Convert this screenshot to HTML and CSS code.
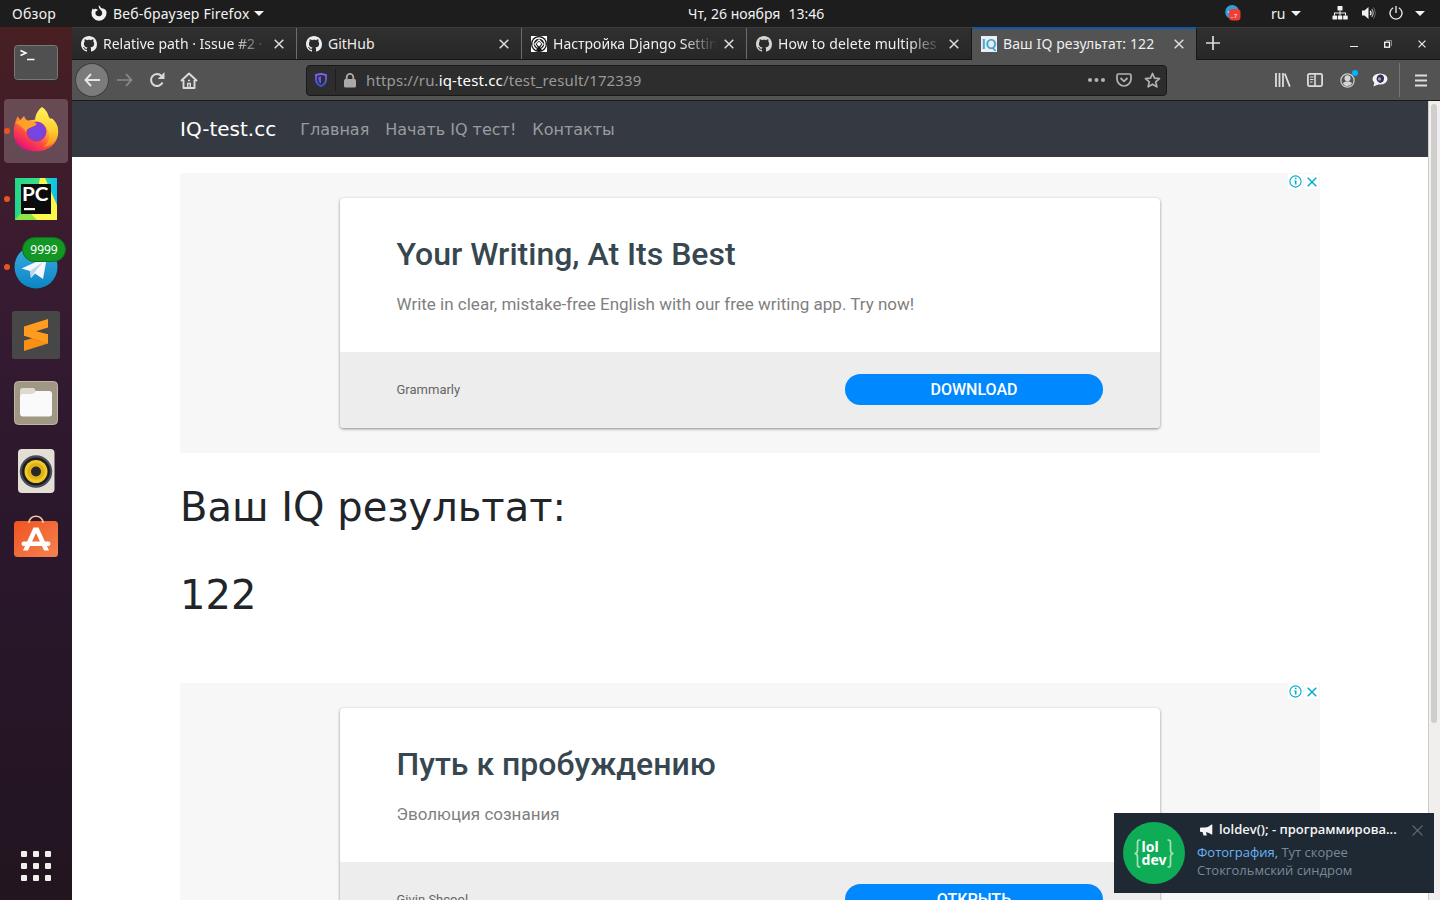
FILE: index.html
```
<!DOCTYPE html>
<html lang="ru">
<head>
<meta charset="utf-8">
<title>Ваш IQ результат: 122</title>
<link rel="stylesheet" href="styles.css">
</head>
<body>
<svg class="defs" width="0" height="0">
  <defs>
    <symbol id="github" viewBox="0 0 16 16"><path fill="currentColor" d="M8 0C3.58 0 0 3.58 0 8c0 3.54 2.29 6.53 5.47 7.59.4.07.55-.17.55-.38 0-.19-.01-.82-.01-1.49-2.01.37-2.53-.49-2.69-.94-.09-.23-.48-.94-.82-1.13-.28-.15-.68-.52-.01-.53.63-.01 1.08.58 1.23.82.72 1.21 1.87.87 2.33.66.07-.52.28-.87.51-1.07-1.78-.2-3.64-.89-3.64-3.95 0-.87.31-1.59.82-2.15-.08-.2-.36-1.02.08-2.12 0 0 .67-.21 2.2.82.64-.18 1.32-.27 2-.27s1.36.09 2 .27c1.53-1.04 2.2-.82 2.2-.82.44 1.1.16 1.92.08 2.12.51.56.82 1.27.82 2.15 0 3.07-1.87 3.75-3.65 3.95.29.25.54.73.54 1.48 0 1.07-.01 1.93-.01 2.2 0 .21.15.46.55.38A8.01 8.01 0 0 0 16 8c0-4.42-3.58-8-8-8z"/></symbol>
    <symbol id="cross" viewBox="0 0 10 10"><path d="M.7.7l8.6 8.6M9.3.7L.7 9.3" stroke="currentColor" stroke-width="1.5" fill="none"/></symbol>
    <symbol id="caret" viewBox="0 0 10 5"><path d="M0 0h10L5 5z" fill="currentColor"/></symbol>
    <symbol id="adinfo" viewBox="0 0 15 15"><circle cx="7.5" cy="7.5" r="5.6" fill="none" stroke="currentColor" stroke-width="1.1"/><path d="M6.9 3.8h1.6v1.4H6.9zM6.3 6.4h2.2v4.2h-1.6V7.4h-.6z" fill="currentColor"/></symbol>
    <linearGradient id="g-shield" x1="0" y1="0" x2="0" y2="1"><stop offset="0" stop-color="#8f5cf5"/><stop offset="1" stop-color="#2f57e0"/></linearGradient>
    <linearGradient id="g-fox" x1=".85" y1=".1" x2=".2" y2=".9"><stop offset="0" stop-color="#fff44f"/><stop offset=".35" stop-color="#ffa436"/><stop offset=".65" stop-color="#ff4b3e"/><stop offset="1" stop-color="#e8107c"/></linearGradient>
    <linearGradient id="g-flame" x1="0" y1="0" x2="0" y2="1"><stop offset="0" stop-color="#fff25a"/><stop offset=".6" stop-color="#ffcd30"/><stop offset="1" stop-color="#ff8a16"/></linearGradient>
    <radialGradient id="g-globe"><stop offset="0" stop-color="#6a4bf0"/><stop offset="1" stop-color="#8d3cc8"/></radialGradient>
    <linearGradient id="g-py" x1="0" y1="0" x2="1" y2="0"><stop offset="0" stop-color="#21d789"/><stop offset=".55" stop-color="#3fdc8a"/><stop offset="1" stop-color="#07c3f2"/></linearGradient>
    <linearGradient id="g-tg" x1="0" y1="0" x2="0" y2="1"><stop offset="0" stop-color="#38aee0"/><stop offset="1" stop-color="#0d85c4"/></linearGradient>
    <linearGradient id="g-bag" x1="0" y1="0" x2="1" y2="1"><stop offset="0" stop-color="#ee5420"/><stop offset="1" stop-color="#f58350"/></linearGradient>
  </defs>
</svg>

<header class="panel">
  <span class="panel-activities">Обзор</span>
  <span class="panel-app">
    <svg width="16" height="16" viewBox="0 0 16 16"><path fill="#f2f2f2" d="M8 .2c.8.9 1.7 1.7 2 2.8 2.600.5 5.800 1.300 5.500 5.300A7.500 7.500 0 1 1 .6 7c.1-1.600.7-2.900 1.300-3.800.2.500.4.900.8 1.200.5-.5 1.400-.7 2.300-.5l1.700.5c-.1 1-.8 1.500-1.800 1.800-.8 1.300-.6 3.200.8 4.300 1.500 1.100 3.900.9 4.900-.6 1-1.500.7-3.400-.5-4.500C9.200 4.500 6.900 2.600 8 .2z"/></svg>
    <span class="panel-app-name">Веб-браузер Firefox</span>
    <svg class="caret" width="10" height="5"><use href="#caret"/></svg>
  </span>
  <span class="panel-clock"><span>Чт, 26 ноября</span><span>13:46</span></span>
  <span class="panel-tray">
    <svg class="tray-tg" width="16" height="16" viewBox="0 0 16 16"><circle cx="7.200" cy="7" r="7" fill="#2d9fd9"/><path d="M2 7l3-1v2z" fill="#fff"/><rect x="4" y="4" width="11.500" height="11.500" rx="3.500" fill="#f23c34"/><text x="5.500" y="12.500" class="tray-count">..7</text></svg>
    <span class="tray-lang">ru</span>
    <svg class="caret tray-caret" width="10" height="5"><use href="#caret"/></svg>
    <svg class="tray-net" width="16" height="14" viewBox="0 0 16 14"><g fill="#f2f2f2"><rect x="5.500" y="0" width="5" height="4.500" rx=".6"/><rect x=".5" y="9.500" width="4.500" height="4" rx=".6"/><rect x="5.800" y="9.500" width="4.500" height="4" rx=".6"/><rect x="11.200" y="9.500" width="4.500" height="4" rx=".6"/><path d="M7.500 4.500h1v2H14v3h-1v-2H8.500v2h-1v-2H3v2H2v-3h5.500z"/></g></svg>
    <svg class="tray-vol" width="16" height="14" viewBox="0 0 16 14"><path d="M1 4.500h2.500L7.500 1v12l-4-3.500H1z" fill="#f2f2f2"/><path d="M9.200 4.800q1.600 2.200 0 4.400" stroke="#f2f2f2" stroke-width="1.300" fill="none"/><path d="M10.800 3q2.700 4 0 8" stroke="#b0b0b0" stroke-width="1.200" fill="none"/><path d="M12.500 1.500q3.500 5.500 0 11" stroke="#666" fill="none"/></svg>
    <svg class="tray-power" width="14" height="14" viewBox="0 0 14 14"><path d="M4.200 1.800a6 6 0 1 0 5.600 0M7 0v7" stroke="#f2f2f2" stroke-width="1.300" fill="none"/></svg>
    <svg class="caret" width="10" height="5"><use href="#caret"/></svg>
  </span>
</header>

<div class="desktop">
  <nav class="dock">
    <div class="dock-tile">
      <svg width="48" height="48" viewBox="0 0 48 48"><rect x="2" y="6" width="44" height="36" rx="3.500" fill="#2b2b2b"/><rect x="2.500" y="6.500" width="43" height="34" rx="3" fill="#505050" stroke="#787878"/><path d="M8.500 11.500l5.500 2.500-5.500 2.500" stroke="#fff" stroke-width="1.500" fill="none"/><path d="M15 20.500h7.500" stroke="#fff" stroke-width="1.500"/></svg>
    </div>
    <div class="dock-tile dock-tile-active"><i class="dock-dot"></i>
      <svg width="48" height="48" viewBox="0 0 48 48"><path fill="url(#g-fox)" d="M5.500 9.500c1.200 1 1.700 2.300 2.700 3.500l4-4c.4 2 1.500 3.500 3.500 4.500l9-1 15-1c5 4 6.800 9 6.500 14.500-.7 11-10 18.500-22 18.300C10.500 44.300 1.700 36.500 1.700 26c0-6 1.300-12 3.800-16.500z"/><path fill="url(#g-flame)" d="M30 0c4 2.500 5.500 5.500 6.500 9 1 2.200 2 2.500 2.500 6 .8-1.500.8-2.500.5-3.700 4.500 3.500 6.700 8.200 6.500 13.700-.5 9-7 14-15 15 5.500-3.500 7.500-10 5.500-16-2-6-8-8-13.500-9.500C23 8 25.500 3.500 30 0z"/><circle cx="24.500" cy="24.500" r="10" fill="url(#g-globe)"/><path fill="#ffa126" d="M3.500 15.500c3.500-2.700 8-2 11.500-1 4-.9 7-.5 9.800 2.700-2.300 2.300-5.300 2.500-8.300 4.300 0 0-2 1-2.300 3.700-2-3.500-6-7-10.700-9.700z"/></svg>
    </div>
    <div class="dock-tile"><i class="dock-dot"></i>
      <svg width="48" height="48" viewBox="0 0 48 48"><path fill="url(#g-py)" d="M3 3h42v42H3z"/><path fill="#fcf84a" d="M28 3h5l12 27v15H14l10-20z"/><path fill="#8ee447" d="M3 45l10-12 12 12z"/><path fill="#0b0b0b" d="M9 9h30v30H9z"/><path fill="#fff" d="M12 33h11v2.200H12z"/><text x="10" y="26" textLength="26.500" lengthAdjust="spacingAndGlyphs" class="pc-text">PC</text></svg>
    </div>
    <div class="dock-tile"><i class="dock-dot"></i>
      <svg width="48" height="48" viewBox="0 0 48 48"><circle cx="24" cy="24" r="21.500" fill="url(#g-tg)"/><path fill="#f4f8fc" d="M9.500 25.500L35 14l-4 22-8-5.500-4 4.500-1-7z"/><path fill="#bdd5e8" d="M18 28l13-9-9 11-3 5z"/></svg>
      <span class="dock-badge">9999</span>
    </div>
    <div class="dock-tile">
      <svg width="48" height="48" viewBox="0 0 48 48"><rect width="48" height="48" rx="2.500" fill="#474747"/><path fill="#f98f15" d="M12 29.500l24-6.500v9.500L12 40z"/><path fill="#d97a10" d="M20 27.500l16-4-8 7z"/><path fill="#ff9c1f" d="M36 8v8.500l-12 3.700 12 3v9L12 24.800V15.500z"/></svg>
    </div>
    <div class="dock-tile">
      <svg width="48" height="48" viewBox="0 0 48 48"><rect x="2.500" y="2.500" width="43" height="43" rx="4" fill="#a09884" stroke="#beb7a4"/><path d="M8 19v-7q0-3 3-3h10q2 0 2.500 3H38v6z" fill="#dedad0"/><path d="M8 18q0-3 3-3h9q2 0 4-3h13q3 0 3 3v20q0 2.500-3 2.500H11q-3 0-3-3z" fill="#fafafa"/></svg>
    </div>
    <div class="dock-tile">
      <svg width="48" height="48" viewBox="0 0 48 48"><rect x="6" y="2" width="36.500" height="44" rx="4" fill="#e3dfd5"/><circle cx="24" cy="24.500" r="16.200" fill="#494c58"/><circle cx="24" cy="24.500" r="14" fill="#1c1d24"/><circle cx="24" cy="24.500" r="11.500" fill="#f2c829"/><circle cx="24" cy="24.500" r="8.500" fill="#e0b315"/><circle cx="24" cy="24.500" r="5" fill="#27272a"/></svg>
    </div>
    <div class="dock-tile">
      <svg width="48" height="48" viewBox="0 0 48 48"><rect x="2" y="6" width="44" height="36" rx="3.500" fill="url(#g-bag)"/><path d="M17 8c0-9 14-9 14 0" stroke="#f3c9a0" stroke-width="1.600" fill="none"/><path d="M21.500 12.500h5l10.500 23h-5L24 18l-8 17.500h-5z" fill="#fff"/><rect x="9.500" y="26.500" width="29" height="4.500" rx="2.200" fill="#fff"/></svg>
    </div>
    <div class="dock-tile dock-apps">
      <svg width="30" height="30" viewBox="0 0 30 30"><g fill="#efefed"><rect width="6" height="6" rx="1"/><rect x="12" width="6" height="6" rx="1"/><rect x="24" width="6" height="6" rx="1"/><rect y="12" width="6" height="6" rx="1"/><rect x="12" y="12" width="6" height="6" rx="1"/><rect x="24" y="12" width="6" height="6" rx="1"/><rect y="24" width="6" height="6" rx="1"/><rect x="12" y="24" width="6" height="6" rx="1"/><rect x="24" y="24" width="6" height="6" rx="1"/></g></svg>
    </div>
  </nav>

  <main class="window">
    <div class="tabs">
      <div class="tab"><svg class="tab-icon" width="16" height="16"><use href="#github"/></svg><span class="tab-title tab-fade">Relative path · Issue #2 · w</span><svg class="tab-close" width="10" height="10"><use href="#cross"/></svg></div>
      <div class="tab"><svg class="tab-icon" width="16" height="16"><use href="#github"/></svg><span class="tab-title">GitHub</span><svg class="tab-close" width="10" height="10"><use href="#cross"/></svg></div>
      <div class="tab"><svg class="tab-icon" width="16" height="16" viewBox="0 0 16 16"><path fill="#fff" d="M0 0h16v16H0z"/><circle cx="8" cy="8" r="8" fill="#151515"/><path d="M5.500 13.500a6 6 0 1 1 5 0" fill="none" stroke="#fff" stroke-width="1.500"/><path d="M6.500 11.500L3.800 8 8 3.800 12.200 8l-2.700 3.500" fill="none" stroke="#fff" stroke-width="1.100"/><path d="M8 5.500L10.500 8 8 10.500 5.500 8z" fill="#fff"/></svg><span class="tab-title tab-fade">Настройка Django Settings</span><svg class="tab-close" width="10" height="10"><use href="#cross"/></svg></div>
      <div class="tab tab-last"><svg class="tab-icon tab-icon-dim" width="16" height="16"><use href="#github"/></svg><span class="tab-title tab-fade tab-title-wide">How to delete multiples f</span><svg class="tab-close" width="10" height="10"><use href="#cross"/></svg></div>
      <div class="tab tab-active"><span class="iq-icon">IQ</span><span class="tab-title tab-title-wide">Ваш IQ результат: 122</span><svg class="tab-close" width="10" height="10"><use href="#cross"/></svg></div>
      <svg class="tab-new" width="14" height="14" viewBox="0 0 14 14"><path d="M7 0v14M0 7h14" stroke="#dcdcdc" stroke-width="1.700"/></svg>
      <div class="window-buttons">
        <svg width="8" height="10" viewBox="0 0 8 10"><path d="M0 7.500h8" stroke="#eee"/></svg>
        <svg width="8" height="8" viewBox="0 0 8 8"><path d="M2 .5h5.500V6" stroke="#888" fill="none"/><rect x=".7" y="2.200" width="4.800" height="5" stroke="#fff" stroke-width="1.300" fill="none"/></svg>
        <svg width="8" height="8"><use href="#cross"/></svg>
      </div>
    </div>

    <div class="toolbar">
      <span class="back"><svg width="16" height="14" viewBox="0 0 16 14"><path d="M7 1L1.500 7 7 13M1.500 7H16" stroke="#e6e6e6" stroke-width="1.900" fill="none"/></svg></span>
      <svg class="fwd" width="16" height="14" viewBox="0 0 16 14"><path d="M9 1l5.500 6L9 13M14.500 7H0" stroke="#8b8b8b" stroke-width="1.700" fill="none"/></svg>
      <svg class="reload" width="16" height="16" viewBox="0 0 16 16"><path d="M13.500 10.500A6 6 0 1 1 12.500 4" stroke="#d9d9d9" stroke-width="2" fill="none"/><path d="M15.500 0v7H8.800z" fill="#d9d9d9"/></svg>
      <svg class="home" width="18" height="17" viewBox="0 0 18 17"><path d="M1 9l8-7.500L17 9M3.500 8v8h11V8" stroke="#dcdcdc" stroke-width="1.900" fill="none" stroke-linejoin="round"/><path d="M7.700 16v-4.500h2.600V16M8 8.500h2" stroke="#dcdcdc" stroke-width="1.400" fill="none"/></svg>
      <div class="urlbar">
        <svg class="shield" width="12" height="14" viewBox="0 0 12 14"><path d="M1 2l5-1.200L11 2v4q0 5-5 7.200Q1 11 1 6z" fill="none" stroke="url(#g-shield)" stroke-width="1.800"/><path d="M6 3.300v7.500Q3.300 9 3.300 6V4z" fill="#5a5cf0"/></svg>
        <i class="url-sep"></i>
        <svg class="lock" width="12" height="15" viewBox="0 0 12 15"><rect y="6" width="12" height="8.500" rx="1.500" fill="#a9a9a9"/><path d="M2.700 7V4.200a3.300 3.300 0 0 1 6.600 0V7" stroke="#a9a9a9" stroke-width="1.900" fill="none"/></svg>
        <span class="url">https://ru.<b>iq-test.cc</b>/test_result/172339</span>
        <svg class="dots" width="17" height="4" viewBox="0 0 17 4"><g fill="#b3b3b3"><circle cx="2" cy="2" r="2"/><circle cx="8.500" cy="2" r="2"/><circle cx="15" cy="2" r="2"/></g></svg>
        <svg class="pocket" width="16" height="14" viewBox="0 0 16 14"><path d="M2.500 1h11Q15 1 15 2.500V6a7 7 0 0 1-14 0V2.500Q1 1 2.500 1z" stroke="#b3b3b3" stroke-width="1.700" fill="none"/><path d="M4.500 5L8 8.300 11.500 5" stroke="#b3b3b3" stroke-width="1.800" fill="none"/></svg>
        <svg class="star" width="17" height="16" viewBox="0 0 17 16"><path d="M8.500 1.500l2 4.700 5 .4-3.800 3.300 1.200 5-4.400-2.700-4.400 2.700 1.200-5L1.500 6.600l5-.4z" stroke="#b3b3b3" stroke-width="1.700" fill="none" stroke-linejoin="round"/></svg>
      </div>
      <div class="tools">
        <svg width="16" height="14" viewBox="0 0 16 14"><path d="M1 0v14M4.500 0v14M8 0v14M9.800.6l5 13" stroke="#dcdcdc" stroke-width="1.800"/></svg>
        <svg width="16" height="14" viewBox="0 0 16 14"><rect x=".9" y=".9" width="14.200" height="12.200" rx="1.500" stroke="#dcdcdc" stroke-width="1.800" fill="none"/><path d="M8 1v12" stroke="#dcdcdc" stroke-width="1.600"/><path d="M3 4h3.500M3 6.500h3.500M3 9h2.500" stroke="#dcdcdc"/></svg>
        <svg class="account" width="19" height="20" viewBox="0 0 19 20"><circle cx="7.500" cy="11.500" r="6.600" stroke="#c8c8c8" stroke-width="1.300" fill="none"/><circle cx="7.500" cy="9.300" r="3" fill="#d6d6d6"/><path d="M2.800 14q4.700-3.500 9.400 0-1.500 3-4.700 3.100-3.200 0-4.700-3.100z" fill="#d6d6d6"/><circle cx="15" cy="4" r="3" fill="#00b3ff"/></svg>
        <svg width="16" height="14" viewBox="0 0 16 14"><ellipse cx="8" cy="6" rx="7.500" ry="5.500" fill="#f4f4f6"/><path d="M2.500 9l-1 4.500L7 11z" fill="#f4f4f6"/><path d="M5 4q1-3 4-2.500 3 .5 3 4T8.500 10Q5 9 4.500 6z" fill="#2c3060"/><circle cx="7.500" cy="6" r="1.700" fill="#b98f8d"/></svg>
        <i class="tools-sep"></i>
        <svg class="menu" width="12" height="13" viewBox="0 0 12 13"><path d="M0 1.500h12M0 6.500h12M0 11.500h12" stroke="#dcdcdc" stroke-width="1.800"/></svg>
      </div>
    </div>

    <div class="viewport">
      <div class="page">
        <nav class="navbar"><span class="brand">IQ-test.cc</span><span>Главная</span><span>Начать IQ тест!</span><span>Контакты</span></nav>
        <section class="ad">
          <div class="ad-marks"><svg width="15" height="15"><use href="#adinfo"/></svg><span class="ad-x"><svg width="10" height="10"><use href="#cross"/></svg></span></div>
          <div class="ad-card">
            <div class="ad-body"><h2>Your Writing, At Its Best</h2><p>Write in clear, mistake-free English with our free writing app. Try now!</p></div>
            <div class="ad-foot"><span>Grammarly</span><span class="ad-button">DOWNLOAD</span></div>
          </div>
        </section>
        <h1>Ваш IQ результат:</h1>
        <h1 class="score">122</h1>
        <section class="ad">
          <div class="ad-marks"><svg width="15" height="15"><use href="#adinfo"/></svg><span class="ad-x"><svg width="10" height="10"><use href="#cross"/></svg></span></div>
          <div class="ad-card">
            <div class="ad-body"><h2>Путь к пробуждению</h2><p>Эволюция сознания</p></div>
            <div class="ad-foot"><span>Givin Shcool</span><span class="ad-button">ОТКРЫТЬ</span></div>
          </div>
        </section>
      </div>
      <div class="scrollbar"><i></i></div>
    </div>
  </main>
</div>

<aside class="toast">
  <div class="avatar">
    <svg width="7" height="29" viewBox="0 0 7 29"><path d="M6.500 1H5.500Q3.500 1 3.500 3.500V11Q3.500 14.500.500 14.500 3.500 14.500 3.500 18v7.500Q3.500 28 5.500 28h1" stroke="#a6e0b5" stroke-width="1.700" fill="none"/></svg>
    <span>lol<br>dev</span>
    <svg width="7" height="29" viewBox="0 0 7 29"><path d="M.5 1h1Q3.500 1 3.500 3.500V11Q3.500 14.500 6.500 14.500 3.500 14.500 3.500 18v7.500Q3.500 28 1.500 28h-1" stroke="#a6e0b5" stroke-width="1.700" fill="none"/></svg>
  </div>
  <div class="toast-text">
    <div class="toast-title"><svg width="13" height="12" viewBox="0 0 13 12"><path d="M0 4.500Q0 3.500 1 3.500h4Q9 3 11.500.5h.8v10h-.8Q9 8.500 6 8l.8 3.500H3.500L2.500 8H1Q0 8 0 7z" fill="#f5f5f5"/></svg><b>loldev(); - программирова...</b></div>
    <p><em>Фотография,</em> Тут скорее<br>Стокгольмский синдром</p>
  </div>
  <svg class="toast-close" width="11" height="11" viewBox="0 0 11 11"><path d="M.5.5l10 10M10.500.5l-10 10" stroke="#5b6671" stroke-width="1.200"/></svg>
</aside>
</body>
</html>
```
FILE: styles.css
```
* { box-sizing: border-box; }
body { margin: 0; width: 1440px; height: 900px; overflow: hidden; display: flex; flex-direction: column; position: relative; font-family: "Noto Sans", sans-serif; background: #fff; }
svg { display: block; flex: none; }
.defs { position: absolute; }
i, em { font-style: normal; }

/* Top panel */
.panel { height: 27px; flex: none; background: #1d1d1d; color: #f2f2f2; font-size: 14px; line-height: 27px; display: grid; grid-template-columns: 79px 609px 1fr auto; padding: 0 15px 0 12px; white-space: nowrap; }
.panel-activities { letter-spacing: .3px; }
.panel-app { display: flex; align-items: center; }
.panel-app svg:first-child { margin-top: -2px; }
.panel-app-name { width: 141px; margin-left: 6px; letter-spacing: .2px; }
.panel-clock { display: flex; gap: 8px; margin-left: -12px; letter-spacing: .03px; }
.caret { color: #f2f2f2; }
.panel-tray { display: flex; align-items: center; }
.tray-tg { margin-top: -1px; }
.tray-count { font: 6px "Noto Sans", sans-serif; fill: #fff; }
.tray-lang { margin-left: 30px; width: 20px; }
.tray-net { margin-left: 31px; margin-top: -1px; }
.tray-vol { margin-left: 13px; margin-top: -1px; }
.tray-power { margin: -1px 12px 0 12px; }

/* Dock */
.desktop { flex: 1; display: flex; min-height: 0; }
.dock { width: 72px; flex: none; padding: 4px 4px 2px; display: flex; flex-direction: column; gap: 4px; background: linear-gradient(180deg, #482022 0%, #421d28 10%, #371b31 30%, #2d182e 50%, #281629 70%, #22151f 100%); }
.dock-tile { width: 64px; height: 64px; flex: none; border-radius: 4px; display: flex; align-items: center; justify-content: center; position: relative; }
.dock-tile-active { background: rgba(255,255,255,.2); }
.dock-dot { position: absolute; left: 0; top: 29px; width: 6px; height: 6px; border-radius: 50%; background: #e95420; }
.dock-badge { position: absolute; left: 18px; top: 2px; width: 44px; height: 25px; border-radius: 13px; background: #129624; border: 1px solid #0b711b; color: #fff; font-size: 12px; line-height: 23px; text-align: center; }
.pc-text { font: bold 19.500px Lato, sans-serif; fill: #fff; }
.dock-apps { margin-top: auto; }

/* Browser chrome */
.window { flex: 1; min-width: 0; display: flex; flex-direction: column; }
.tabs { height: 33px; flex: none; display: flex; background: linear-gradient(#303030, #272727); border-top: 1px solid #3b3b3b; border-bottom: 1px solid #151515; color: #eee; font-size: 14px; }
.tab { width: 225px; flex: none; display: flex; align-items: center; padding: 1px 12px 0 9px; border-right: 1px solid #6d6d6d; }
.tab-last { border-color: #171717; }
.tab-active { background: #535353; height: 33px; margin-top: -1px; border-top: 2px solid #1058a8; border-right-color: #171717; padding: 0 12px 1px 9px; }
.tab-icon-dim { color: #d8d4cf; }
.tab-title { margin-left: 6px; width: 165px; overflow: hidden; white-space: nowrap; line-height: 22px; }
.tab-title-wide { letter-spacing: .12px; }
.tab-fade { -webkit-mask-image: linear-gradient(90deg, #000 130px, transparent 164px); mask-image: linear-gradient(90deg, #000 130px, transparent 164px); }
.tab-close { margin-left: auto; color: #ddd; }
.iq-icon { width: 16px; height: 16px; flex: none; background: #eee; color: #35a6d8; font: bold 13px/16px Lato, sans-serif; text-align: center; }
.tab-new { margin: 8px 0 0 9px; }
.window-buttons { display: flex; align-items: center; gap: 26px; margin-left: auto; padding: 1px 14px 0 0; color: #eee; }

.toolbar { height: 41px; flex: none; display: flex; align-items: center; background: #535353; border-bottom: 1px solid #1a1a1a; padding: 0 13px 0 4px; }
.back { width: 32px; height: 32px; border-radius: 50%; background: #7b7b7b; box-shadow: 0 0 0 1px #3e3e3e; display: flex; align-items: center; justify-content: center; }
.fwd { margin-left: 9px; }
.reload { margin-left: 16px; }
.home { margin-left: 15px; }
.urlbar { width: 861px; height: 31px; margin: 0 0 0 108px; background: #2d2d2d; border: 1px solid #191919; border-radius: 4px; display: flex; align-items: center; padding: 0 5px 0 8px; }
.url-sep { width: 1px; height: 22px; margin-left: 8px; background: #1d1d1d; }
.lock { margin-left: 8px; }
.url { margin: 0 0 1px 10px; font-size: 15px; color: #9a9a9a; letter-spacing: .14px; }
.url b { font-weight: 400; color: #fff; }
.dots { margin-left: auto; }
.pocket { margin-left: 11px; }
.star { margin-left: 12px; }
.tools { display: flex; align-items: center; margin-left: auto; gap: 16px; }
.account { margin: -3px -3px 0 1px; }
.tools-sep { width: 1px; height: 34px; background: #747474; margin: 0 -1px 0 -5px; }

/* Page */
.viewport { flex: 1; min-height: 0; display: flex; }
.page { width: 1356px; overflow: hidden; font-family: "DejaVu Sans", sans-serif; color: #212529; }
.navbar { height: 56px; padding: 0 108px; background: #353941; display: flex; align-items: center; gap: 16px; font-size: 16px; color: #999c9f; }
.brand { font-size: 20px; color: #fff; margin-right: 8px; }
.ad { width: 1140px; height: 280px; margin: 16px 108px 0; padding-top: 25px; background: #f7f7f7; position: relative; }
.ad-marks { position: absolute; top: 1px; right: 1px; display: flex; gap: 1px; color: #00aecd; }
.ad-marks > * { background: #fff; }
.ad-x { width: 15px; height: 15px; display: flex; align-items: center; justify-content: center; }
.ad-card { width: 820px; height: 230px; margin: 0 auto; background: #fff; border-radius: 4px; box-shadow: 0 1px 3px rgba(0,0,0,.45); font-family: Roboto, sans-serif; overflow: hidden; }
.ad-body { height: 154px; padding: 36px 57px 0 56.500px; }
.ad h2 { margin: 0; font-size: 32px; line-height: 40px; font-weight: 500; color: #37474f; }
.ad p { margin: 18px 0 0; font-size: 17px; line-height: 24px; color: #808080; }
.ad-foot { height: 76px; background: #ededed; padding: 0 57px 2px 56.500px; display: flex; align-items: center; justify-content: space-between; font-size: 13px; color: #666; }
.ad-button { width: 258px; height: 31px; border-radius: 16px; background: #0088ff; color: #fff; font-size: 16px; font-weight: 500; line-height: 31px; text-align: center; }
h1 { margin: 30px 108px 0; font-size: 40px; line-height: 48px; font-weight: 400; }
.score { margin-top: 40px; margin-bottom: 64px; }
.scrollbar { width: 12px; background: #f0efee; border-left: 1px solid #d2cbc5; padding: 3px 3px 0 2px; }
.scrollbar i { display: block; width: 6px; height: 619px; border-radius: 3px; background: #cecece; }

/* Notification over the desktop */
.toast { position: absolute; left: 1114px; top: 813px; width: 320px; height: 80px; background: #1f2933; display: flex; padding: 9px; }
.avatar { width: 62px; height: 62px; flex: none; border-radius: 50%; background: #0eac57; display: flex; align-items: center; justify-content: center; gap: 1px; color: #fff; font-size: 14px; line-height: 13px; font-weight: 700; }
.toast-text { margin-left: 12px; white-space: nowrap; }
.toast-title { display: flex; align-items: center; gap: 6px; color: #f5f5f5; font-size: 13px; line-height: 15px; padding-left: 3px; }
.toast-title b { font-family: "Open Sans", sans-serif; font-weight: 600; }
.toast p { margin: 6px 0 0; color: #7a8898; font: 13px/18px "Open Sans", sans-serif; }
.toast em { color: #6ab3f3; }
.toast-close { position: absolute; left: 298px; top: 12px; }
```
